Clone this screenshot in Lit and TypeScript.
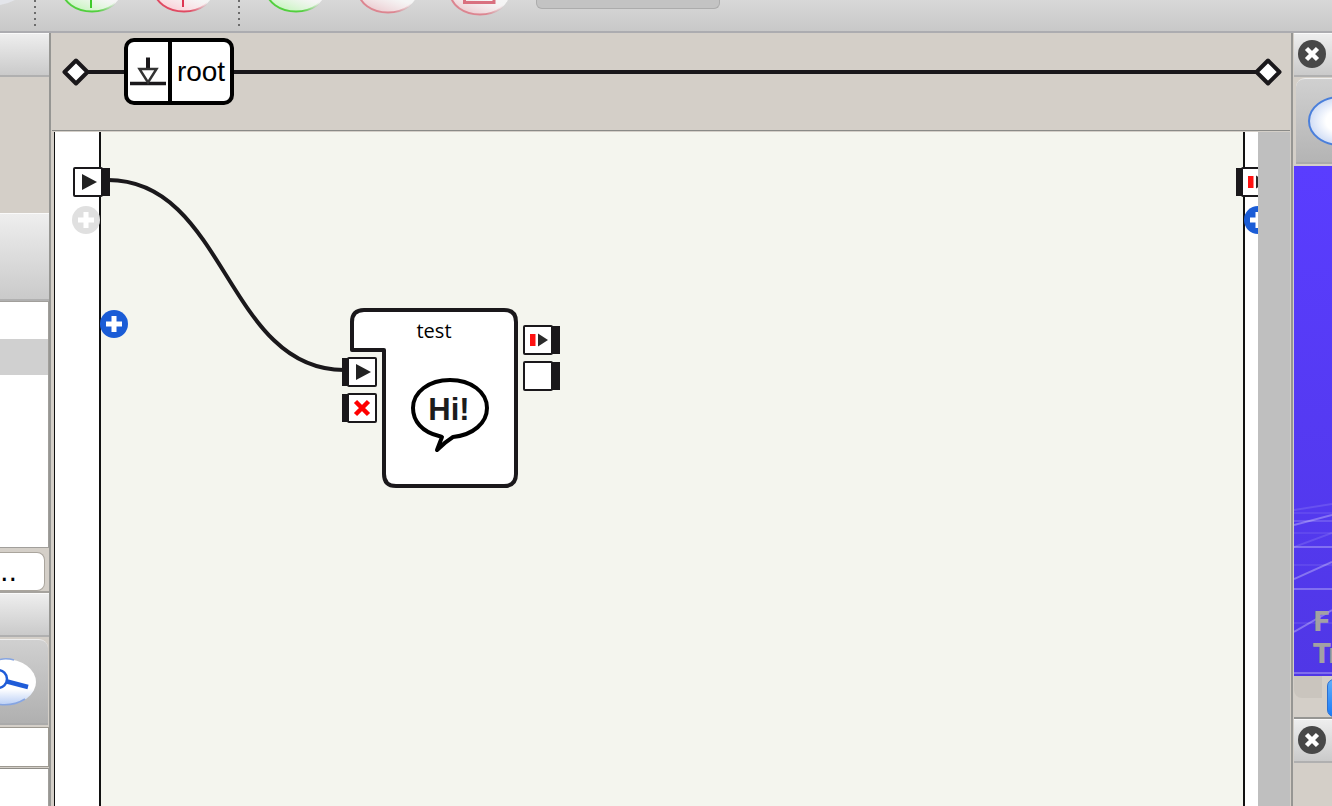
import { LitElement, html, svg, css } from "lit";
import { customElement, property } from "lit/decorators.js";

const sharedButton = css`
  button {
    display: block;
    margin: 0;
    padding: 0;
    border: 0;
    background: none;
    font: inherit;
    color: inherit;
    cursor: pointer;
  }
  svg {
    display: block;
  }
`;

const INK = "#1a181b";

/** Connector of a box: a small framed symbol with a solid bar on one side. */
@customElement("flow-port")
class FlowPort extends LitElement {
  static styles = [
    sharedButton,
    css`
      :host {
        display: block;
      }
    `,
  ];

  @property() kind = "play";
  @property() side = "left";
  @property() label = "";

  private glyph() {
    switch (this.kind) {
      case "play":
        return svg`<path d="M9 7L24 15L9 23Z" fill="#222"/>`;
      case "stop":
        return svg`<path d="M8.500 8.500L21.500 21.500M21.500 8.500L8.500 21.500" stroke="#f00" stroke-width="4.500"/>`;
      case "pulse":
        return svg`<path d="M7 9H12.500V21H7Z" fill="#f11"/><path d="M15 8.500L25 15L15 21.500Z" fill="#2a2a2a"/>`;
      default:
        return null;
    }
  }

  render() {
    const left = this.side === "left";
    return html`<button aria-label=${this.label}>
      <svg width="37" height="30" viewBox="0 0 37 30">
        <path d=${left ? "M0 1H8V29H0Z" : "M28 1H37V29H28Z"} fill=${INK} />
        <g transform=${left ? "translate(5 0)" : ""}>
          <rect x="1" y="1" width="28" height="28" rx="1" fill="#fff" stroke=${INK} stroke-width="2" />
          ${this.glyph()}
        </g>
      </svg>
    </button>`;
  }
}

@customElement("add-button")
class AddButton extends LitElement {
  static styles = [
    sharedButton,
    css`
      :host {
        display: block;
      }
    `,
  ];

  @property() color = "#1a5cd6";
  @property() label = "Add";

  render() {
    return html`<button aria-label=${this.label}>
      <svg width="28" height="28" viewBox="0 0 28 28">
        <circle cx="14" cy="14" r="14" fill=${this.color} />
        <path d="M14 6V22M6 14H22" stroke="#fff" stroke-width="5" />
      </svg>
    </button>`;
  }
}

@customElement("close-button")
class CloseButton extends LitElement {
  static styles = sharedButton;

  render() {
    return html`<button aria-label="Close panel">
      <svg width="28" height="28" viewBox="0 0 28 28">
        <circle cx="14" cy="14" r="14" fill="#484848" />
        <path d="M8.500 8.500L19.500 19.500M19.500 8.500L8.500 19.500" stroke="#fff" stroke-width="4.500" />
      </svg>
    </button>`;
  }
}

@customElement("top-bar")
class TopBar extends LitElement {
  static styles = [
    sharedButton,
    css`
      :host {
        display: flex;
        align-items: flex-start;
        box-sizing: border-box;
        height: 33px;
        border-bottom: 2px solid #acacb0;
        background: linear-gradient(#d8d8d8, #c8c8c8);
        overflow: hidden;
      }
      .edge {
        flex: none;
        width: 34px;
        height: 5px;
      }
      .divider {
        flex: none;
        width: 2px;
        height: 26px;
        background: repeating-linear-gradient(#6c6c6c 0 2px, transparent 2px 6px);
      }
      .group {
        display: flex;
        gap: 32px;
        padding: 0 25px;
      }
      .search {
        flex: none;
        box-sizing: border-box;
        width: 184px;
        height: 9px;
        margin-left: 2px;
        padding: 0;
        border: 1px solid #acacac;
        border-top: 0;
        border-radius: 0 0 6px 6px;
        background: #c3c3c3;
        outline: none;
      }
    `,
  ];

  private round(id: string, stroke: string, tint: string, bottom: number, label: string, mark: unknown = null) {
    return html`<button aria-label=${label}>
      <svg width="60" height="16" viewBox="0 0 60 16">
        <defs>
          <linearGradient id=${id} x1="0" x2="1">
            <stop offset="0" stop-color=${stroke} />
            <stop offset="0.600" stop-color=${stroke} />
            <stop offset="0.900" stop-color=${stroke} stop-opacity="0" />
          </linearGradient>
          <linearGradient id="${id}f" x1="0.300" x2="0.500" y1="1" y2="0.600">
            <stop offset="0" stop-color=${tint} />
            <stop offset="1" stop-color="#fff" stop-opacity="0.750" />
          </linearGradient>
        </defs>
        <ellipse cx="31" cy=${bottom - 22} rx="29.500" ry="21.500" fill="url(#${id}f)" stroke="url(#${id})" stroke-width="2" />
        ${mark}
      </svg>
    </button>`;
  }

  render() {
    return html`
      <svg class="edge" viewBox="0 0 34 5"><path d="M0 0H15L8 3L0 5Z" fill="#e3e5ea" /></svg>
      <div class="divider"></div>
      <div class="group">
        ${this.round("a", "#52cf3e", "#c4f5bb", 12, "Add", svg`<path d="M30 0V8" stroke="#3fca2c" stroke-width="2"/>`)}
        ${this.round("b", "#e04a62", "#fbcdd5", 12, "Remove", svg`<path d="M30 0V7" stroke="#dd3652" stroke-width="2"/>`)}
      </div>
      <div class="divider"></div>
      <div class="group">
        ${this.round("c", "#52cf3e", "#c4f5bb", 12, "Play")}
        ${this.round("d", "#dc8590", "#ebc9ce", 13, "Pause")}
        ${this.round("e", "#dc8590", "#ebc9ce", 15, "Stop", svg`<path d="M15.500 0V2.500H45V0" fill="none" stroke="#d9707f" stroke-width="3"/>`)}
      </div>
      <input class="search" aria-label="Progress" readonly />
    `;
  }
}

@customElement("left-dock")
class LeftDock extends LitElement {
  static styles = [
    sharedButton,
    css`
      :host {
        display: flex;
        flex-direction: column;
        box-sizing: border-box;
        margin-right: 1px;
        border-right: 2px solid #969693;
        background: #d4cfc8;
        overflow: hidden;
      }
      .title {
        flex: none;
        box-sizing: border-box;
        height: 44px;
        border-top: 1px solid #fafafa;
        border-bottom: 2px solid #b0b0b0;
        background: linear-gradient(#eee, #cacaca);
      }
      .blank {
        flex: none;
        height: 136px;
      }
      .title.tall {
        height: 88px;
      }
      .list {
        flex: none;
        box-sizing: border-box;
        height: 247px;
        padding-top: 37px;
        border: 1px solid #a19f9b;
        border-left: 0;
        background: #fff;
      }
      .row {
        height: 36px;
        background: #d0d0d0;
      }
      .actions {
        flex: none;
        display: flex;
        box-sizing: border-box;
        height: 45px;
        padding-top: 4px;
        border-bottom: 2px solid #a6a39e;
      }
      .browse {
        box-sizing: border-box;
        width: 45px;
        height: 39px;
        border: 1px solid #aaa59d;
        border-left: 0;
        border-radius: 0 8px 8px 0;
        background: #fff;
        color: #000;
        font: 27px/32px "DejaVu Sans", sans-serif;
        text-align: left;
      }
      .tools {
        flex: none;
        display: flex;
        align-items: center;
        box-sizing: border-box;
        height: 86px;
        margin: 2px 1px 2px 0;
        border-top: 1px solid #eee;
        border-bottom: 2px solid #aaa;
        border-radius: 0 9px 0 0;
        background: linear-gradient(#d0d0d0, #b0b0b0);
      }
      .filter {
        flex: none;
        box-sizing: border-box;
        width: 49px;
        height: 40px;
        padding: 0;
        border: 1px solid #9d9991;
        border-left: 0;
        border-radius: 0;
        background: #fff;
      }
      .tree {
        flex: 1;
        margin-top: 1px;
        border-top: 1px solid #8f8d88;
        border-right: 1px solid #a19f9b;
        background: #fff;
      }
    `,
  ];

  render() {
    return html`
      <div class="title"></div>
      <div class="blank"></div>
      <div class="title tall"></div>
      <div class="list"><div class="row"></div></div>
      <div class="actions"><button class="browse" aria-label="Browse">..</button></div>
      <div class="title"></div>
      <div class="tools">
        <button aria-label="Inspect">
          <svg width="37" height="48" viewBox="0 0 37 48">
            <defs>
              <linearGradient id="lens" x1="0" x2="0" y1="0" y2="1">
                <stop offset="0" stop-color="#fff" />
                <stop offset="0.650" stop-color="#fff" />
                <stop offset="1" stop-color="#b9cef5" />
              </linearGradient>
            </defs>
            <ellipse cx="5" cy="24" rx="31" ry="23" fill="url(#lens)" />
            <path d="M0 1.500Q7 0 14 2M0 46.500Q14 48 25 41" fill="none" stroke="#86a5e2" stroke-width="1.500" />
            <circle cx="-2" cy="21" r="9" fill="none" stroke="#1f5cd8" stroke-width="2.500" />
            <path d="M7 23.500L28 29" stroke="#1f5cd8" stroke-width="4.500" />
          </svg>
        </button>
      </div>
      <input class="filter" aria-label="Filter" />
      <div class="tree"></div>
    `;
  }
}

@customElement("path-bar")
class PathBar extends LitElement {
  static styles = [
    sharedButton,
    css`
      :host {
        display: flex;
        align-items: center;
        box-sizing: border-box;
        flex: none;
        padding: 5px 8px 25px 10px;
        border-bottom: 1px solid #8a8a87;
        background: #d4cfc8;
      }
      .line {
        height: 4px;
        background: #1a181b;
      }
      .lead {
        width: 36px;
        margin-left: -2px;
      }
      .rest {
        flex: 1;
        margin-right: -2px;
      }
      .diamond {
        flex: none;
      }
      .crumb {
        display: flex;
        box-sizing: border-box;
        height: 67px;
        border: 4px solid #000;
        border-radius: 10px;
        background: #fff;
        color: #000;
      }
      .icon {
        display: flex;
        align-items: center;
        border-right: 4px solid #000;
        height: 59px;
      }
      .name {
        width: 58px;
        font: 28px/60px "Liberation Sans", sans-serif;
        text-align: center;
      }
    `,
  ];

  private diamond() {
    return html`<svg class="diamond" width="28" height="28" viewBox="0 0 28 28">
      <path d="M14 2.500L25.500 14L14 25.500L2.500 14Z" fill="#fff" stroke=${INK} stroke-width="4" stroke-linejoin="round" />
    </svg>`;
  }

  render() {
    return html`
      ${this.diamond()}
      <div class="line lead"></div>
      <button class="crumb">
        <span class="icon">
          <svg width="40" height="36" viewBox="0 0 40 36">
            <path d="M2 29.500H38" stroke=${INK} stroke-width="3.500" />
            <path d="M20 3.500V15" stroke=${INK} stroke-width="4" />
            <path d="M11.500 15H28.500L20 28.500Z" fill="#fff" stroke="#333" stroke-width="2.500" />
          </svg>
        </span>
        <span class="name">root</span>
      </button>
      <div class="line rest"></div>
      ${this.diamond()}
    `;
  }
}

@customElement("flow-canvas")
class FlowCanvas extends LitElement {
  static styles = [
    sharedButton,
    css`
      :host {
        display: flex;
        flex: 1;
        min-height: 0;
        padding: 1px 0 0 2px;
        background: #d4cfc8;
      }
      .sheet {
        position: relative;
        display: flex;
        flex: 1;
        overflow: hidden;
      }
      .rail {
        box-sizing: border-box;
        background: #fff;
      }
      .inputs {
        width: 47px;
        border-left: 1px solid #111;
        border-right: 2px solid #111;
      }
      .outputs {
        width: 15px;
        border-left: 2px solid #111;
      }
      .stage {
        flex: 1;
        background: #f4f5ee;
      }
      .gutter {
        width: 32px;
        background: #bfbfbf;
      }
      .wire,
      .pin,
      .node {
        position: absolute;
      }
      .wire {
        left: 54px;
        top: 44px;
      }
      .start {
        left: 19px;
        top: 35px;
      }
      .add-input {
        left: 18px;
        top: 74px;
      }
      .add-stage {
        left: 46px;
        top: 178px;
      }
      .end {
        right: -15px;
        top: 35px;
      }
      .add-output {
        right: -14px;
        top: 74px;
      }
      .node {
        left: 296px;
        top: 176px;
        width: 168px;
        height: 180px;
      }
      .frame {
        position: absolute;
        inset: 0;
      }
      .name {
        position: relative;
        padding-top: 9px;
        font: 20px/28px "Open Sans", sans-serif;
        color: #000;
        text-align: center;
      }
      .bubble {
        position: relative;
        margin: 31px 0 0 59px;
      }
      .ports {
        position: absolute;
        display: flex;
        flex-direction: column;
        gap: 6px;
      }
      .ports.in {
        left: -8px;
        top: 49px;
      }
      .ports.out {
        left: 173px;
        top: 17px;
      }
      .speech {
        font: bold 31px "Liberation Sans", sans-serif;
        fill: #1c1c1c;
      }
    `,
  ];

  render() {
    return html`
      <div class="sheet">
        <div class="rail inputs"></div>
        <div class="stage"></div>
        <div class="rail outputs"></div>

        <svg class="wire" width="240" height="200" viewBox="0 0 240 200">
          <path d="M0 4C118 4 118 194 236 194" fill="none" stroke=${INK} stroke-width="4" />
        </svg>
        <flow-port class="pin start" kind="play" side="right" label="On start"></flow-port>
        <add-button class="pin add-input" color="#e0e0e0" label="Add input"></add-button>
        <add-button class="pin add-stage" label="Add box input"></add-button>
        <flow-port class="pin end" kind="pulse" side="left" label="On stopped"></flow-port>
        <add-button class="pin add-output" label="Add output"></add-button>

        <div class="node">
          <svg class="frame" width="168" height="180" viewBox="0 0 168 180">
            <path
              d="M2 42V14Q2 2 14 2H154Q166 2 166 14V166Q166 178 154 178H46Q34 178 34 166V42Z"
              fill="#fff"
              stroke=${INK}
              stroke-width="4"
              stroke-linejoin="round"
            />
          </svg>
          <div class="name">test</div>
          <svg class="bubble" width="82" height="80" viewBox="0 0 82 80">
            <path
              d="M30 60C13 56 4 45 4 32C4 16 20 4 41 4C62 4 78 16 78 32C78 47 64 59 44 61Q36 66 28 74L33 61Z"
              fill="#fff"
              stroke="#000"
              stroke-width="4"
              stroke-linejoin="round"
            />
            <text class="speech" x="40" y="44" text-anchor="middle">Hi!</text>
          </svg>
          <div class="ports in">
            <flow-port kind="play" side="left" label="Start"></flow-port>
            <flow-port kind="stop" side="left" label="Stop"></flow-port>
          </div>
          <div class="ports out">
            <flow-port kind="pulse" side="right" label="Stopped"></flow-port>
            <flow-port kind="empty" side="right" label="Output"></flow-port>
          </div>
        </div>
      </div>
      <div class="gutter"></div>
    `;
  }
}

@customElement("right-dock")
class RightDock extends LitElement {
  static styles = [
    sharedButton,
    css`
      :host {
        display: flex;
        flex-direction: column;
        box-sizing: border-box;
        border-left: 2px solid #969693;
        padding-left: 1px;
        background: #d4cfc8;
        overflow: hidden;
      }
      .title {
        flex: none;
        display: flex;
        align-items: center;
        box-sizing: border-box;
        height: 44px;
        padding: 0 0 2px 4px;
        border-top: 1px solid #fafafa;
        border-bottom: 2px solid #b0b0b0;
        background: linear-gradient(#eee, #cacaca);
      }
      .tools {
        flex: none;
        display: flex;
        align-items: center;
        box-sizing: border-box;
        height: 86px;
        margin: 1px 0 2px 2px;
        border-top: 1px solid #eee;
        border-bottom: 2px solid #aaa;
        border-radius: 9px 0 0 0;
        padding-left: 12px;
        background: linear-gradient(#d0d0d0, #b4b4b4);
      }
      .view {
        flex: none;
        display: grid;
        height: 510px;
        overflow: hidden;
      }
      .scene,
      .stats {
        grid-area: 1 / 1;
      }
      .stats {
        align-self: end;
        padding: 0 0 6px 19px;
        font: bold 26px/32px "DejaVu Sans", sans-serif;
        color: #a3a1a3;
        white-space: nowrap;
      }
      .tabs {
        flex: none;
        display: flex;
        align-items: flex-start;
        gap: 5px;
        box-sizing: border-box;
        height: 43px;
        border-bottom: 2px solid #969693;
      }
      .tab {
        flex: none;
        width: 28px;
        height: 22px;
        border-radius: 0 0 0 8px;
        background: #cac5be;
      }
      .tabs .primary {
        flex: none;
        box-sizing: border-box;
        width: 28px;
        height: 38px;
        margin-top: 3px;
        border: 1px solid #2b6fd0;
        border-radius: 7px;
        background: linear-gradient(#5faefa, #1a7cf8);
      }
    `,
  ];

  render() {
    return html`
      <div class="title"><close-button></close-button></div>
      <div class="tools">
        <button aria-label="View">
          <svg width="60" height="50" viewBox="0 0 60 50">
            <defs>
              <radialGradient id="glow">
                <stop offset="0" stop-color="#fff" />
                <stop offset="0.450" stop-color="#fff" />
                <stop offset="1" stop-color="#cfdcf5" />
              </radialGradient>
            </defs>
            <ellipse cx="32" cy="25" rx="31" ry="24" fill="url(#glow)" stroke="#4a7fdb" stroke-width="2" />
          </svg>
        </button>
      </div>
      <div class="view">
        <svg class="scene" width="38" height="510" viewBox="0 0 38 510">
          <defs>
            <linearGradient id="sky" x1="0" x2="0" y1="0" y2="1">
              <stop offset="0" stop-color="#5a3dff" />
              <stop offset="1" stop-color="#5037e6" />
            </linearGradient>
          </defs>
          <rect width="38" height="510" fill="url(#sky)" />
          <g fill="none" stroke="#fff" stroke-width="2">
            <path d="M0 347H38M0 367H38M0 399H38M0 457H38" opacity="0.080" />
            <path d="M0 355H38" opacity="0.150" />
            <path d="M0 381H38M0 423H38M0 507H38" opacity="0.280" />
            <path d="M0 359L38 349M0 413L38 396M0 466L38 444" opacity="0.300" />
            <path d="M0 381L38 367M0 344L38 338" opacity="0.120" />
          </g>
        </svg>
        <div class="stats">F<br />Tr</div>
      </div>
      <div class="tabs">
        <div class="tab"></div>
        <button class="primary" aria-label="Apply"></button>
      </div>
      <div class="title"><close-button></close-button></div>
    `;
  }
}

@customElement("app-root")
class AppRoot extends LitElement {
  static styles = css`
    :host {
      display: flex;
      flex-direction: column;
      height: 100vh;
      overflow: hidden;
      background: #d4cfc8;
    }
    .body {
      flex: 1;
      min-height: 0;
      display: grid;
      grid-template-columns: 52px 1fr 41px;
      grid-template-rows: minmax(0, 1fr);
    }
    .editor {
      display: flex;
      flex-direction: column;
      min-width: 0;
      padding-right: 1px;
    }
  `;

  render() {
    return html`
      <top-bar></top-bar>
      <div class="body">
        <left-dock></left-dock>
        <main class="editor">
          <path-bar></path-bar>
          <flow-canvas></flow-canvas>
        </main>
        <right-dock></right-dock>
      </div>
    `;
  }
}
